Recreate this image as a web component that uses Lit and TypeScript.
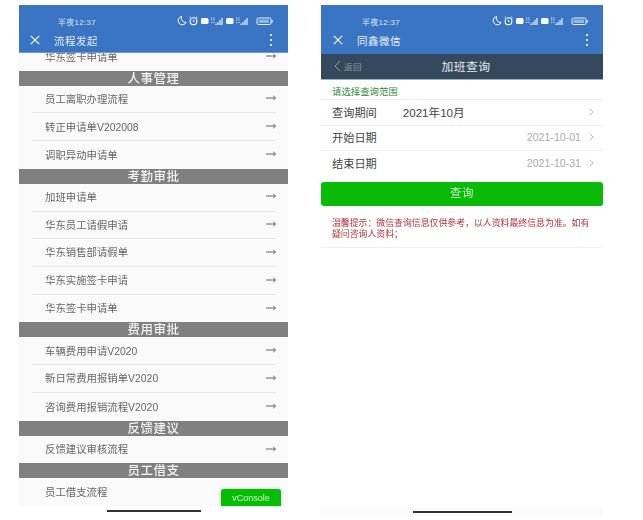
import { LitElement, html, css, svg } from "lit";
import { customElement } from "lit/decorators.js";

const sections: { title?: string; items: string[] }[] = [
  { items: ["华东签卡申请单"] },
  { title: "人事管理", items: ["员工离职办理流程", "转正申请单V202008", "调职异动申请单"] },
  { title: "考勤审批", items: ["加班申请单", "华东员工请假申请", "华东销售部请假单", "华东实施签卡申请", "华东签卡申请单"] },
  { title: "费用审批", items: ["车辆费用申请V2020", "新日常费用报销单V2020", "咨询费用报销流程V2020"] },
  { title: "反馈建议", items: ["反馈建议审核流程"] },
  { title: "员工借支", items: ["员工借支流程"] },
];

const statusIcons = svg`
  <path d="M4.5 1.5a4.2 4.2 0 1 0 4.6 6A4.6 4.6 0 0 1 4.5 1.5z" fill="none" stroke="#fff" stroke-width="1"/>
  <circle cx="16.5" cy="6.2" r="3.4" fill="none" stroke="#fff" stroke-width="1.1"/>
  <path d="M12.5 2.7l1.5-1M20.5 2.7l-1.5-1M16.3 4.7v1.8h1.6" stroke="#fff" stroke-width=".8" fill="none"/>
  <rect x="24" y="3" width="7.5" height="6" rx="1.5" fill="#fff"/>
  <path d="M34 3h4M34 5h4M34 7.500h4" stroke="#fff" stroke-width=".8" stroke-dasharray="1 .7"/>
  <path d="M39 8.500v1.500M41 7v3M43 5v5M45 3v7" stroke="#fff" stroke-width="1.1"/>
  <rect x="49" y="3" width="7.5" height="6" rx="1.5" fill="#fff"/>
  <path d="M59 3h4M59 5h4M59 7.500h4" stroke="#fff" stroke-width=".8" stroke-dasharray="1 .7"/>
  <path d="M64 8.500v1.500M66 7v3M68 5v5M70 3v7" stroke="#fff" stroke-width="1.1"/>
  <rect x="80" y="3" width="14" height="6.5" rx="1.5" fill="none" stroke="#fff" stroke-width=".9"/>
  <rect x="81.5" y="4.5" width="10.5" height="3.5" fill="#fff" opacity=".45"/>
  <rect x="94.5" y="5" width="1.2" height="2.5" fill="#fff"/>
`;

const closeIcon = html`<svg class="close" viewBox="0 0 10 10" width="10" height="10"><path d="M.8.8l8.400 8.400M9.200.8L.8 9.200" stroke="#fff" stroke-width="1.1" fill="none"/></svg>`;
const dots = html`<svg class="dots" viewBox="0 0 4 14" width="4" height="14"><circle cx="2" cy="2" r="1.1" fill="#fff"/><circle cx="2" cy="7" r="1.1" fill="#fff"/><circle cx="2" cy="12" r="1.1" fill="#fff"/></svg>`;
const arrow = html`<svg class="arrow" viewBox="0 0 10 6" width="10" height="6"><path d="M0 3h9.300M7.300 1l2.200 2-2.200 2" stroke="#555" stroke-width=".9" fill="none"/></svg>`;
const chev = html`<svg class="chev" viewBox="0 0 5 8" width="5" height="8"><path d="M.8.8L4.200 4 .8 7.200" stroke="#bbb" stroke-width="1" fill="none"/></svg>`;

@customElement("app-root")
export class AppRoot extends LitElement {
  static styles = css`
    :host {
      display: flex;
      width: 643px;
      height: 520px;
      padding: 5px 0 0 19px;
      box-sizing: border-box;
      background: #fff;
      gap: 33px;
      align-items: flex-start;
      overflow: hidden;
      font-family: "Liberation Sans", "Noto Sans CJK SC", sans-serif;
    }
    .phone {
      position: relative;
      display: flex;
      flex-direction: column;
      filter: blur(0.45px);
    }
    .left { width: 269px; height: 510px; }
    .right { width: 282px; height: 512px; }
    .head {
      background: #3a75c4;
      height: 48px;
      flex: none;
      color: #fff;
      display: flex;
      flex-direction: column;
      box-sizing: border-box;
      border-bottom: 1px solid #6f97cf;
    }
    .right .head { height: 49px; border-bottom: none; }
    .status {
      display: flex;
      align-items: center;
      justify-content: space-between;
      height: 12px;
      margin-top: 10px;
      font-size: 8px;
      letter-spacing: 0.3px;
      color: #dfe8f5;
    }
    .left .status { padding: 0 15px 0 39px; }
    .right .status { padding: 0 15px 0 41px; }
    .status svg { display: block; }
    .titlebar {
      display: flex;
      align-items: center;
      height: 18px;
      margin-top: 4px;
      font-size: 10.5px;
      letter-spacing: 0.5px;
      color: #eaf0f9;
    }
    .left .titlebar { padding: 0 15px 0 11px; }
    .right .titlebar { padding: 0 14px 0 12px; }
    .close { margin-right: 14px; }
    .dots { margin-left: auto; }
    .scroll {
      height: 453px;
      flex: none;
      overflow: hidden;
      background: #fafafa;
    }
    .inner { margin-top: -10px; }
    .sect {
      background: #808080;
      color: #f4f4f4;
      height: 15px;
      line-height: 16px;
      text-align: center;
      font-size: 12.5px;
      font-weight: 500;
      letter-spacing: 0.5px;
    }
    .rows { padding: 0 12px 0 13px; }
    .row {
      height: 27.72px;
      box-sizing: border-box;
      display: flex;
      align-items: center;
      justify-content: space-between;
      padding: 0 0 1.5px 13px;
      font-size: 10.4px;
      color: #666;
      border-bottom: 1px solid #e6e6e6;
    }
    .row:last-child { border-bottom: none; }
    .bottom {
      flex: 1;
      background: #fff;
      display: flex;
      justify-content: center;
      padding-top: 4px;
    }
    .home {
      width: 94px;
      height: 2px;
      background: #333;
    }
    .vc {
      position: absolute;
      left: 202px;
      top: 484px;
      width: 60px;
      height: 17px;
      background: #04be02;
      color: #d5f3d5;
      border-radius: 3px 3px 0 0;
      font-size: 9px;
      line-height: 18px;
      text-align: center;
      box-shadow: 0 0 3px rgba(0, 0, 0, 0.25);
    }
    .navbar {
      height: 26px;
      flex: none;
      background: #34495e;
      display: flex;
      align-items: center;
      position: relative;
      color: #e6e9ed;
      border-bottom: 1px solid #9fb0bf;
      box-sizing: border-box;
      justify-content: center;
      padding: 0 0 2px 8px;
      font-size: 11.8px;
      letter-spacing: 0.4px;
    }
    .back {
      position: absolute;
      left: 13px;
      top: 6px;
      display: flex;
      align-items: center;
      gap: 3px;
      color: #8f9caa;
      font-size: 8.5px;
    }
    .content {
      flex: 1;
      background: #fff;
      display: flex;
      flex-direction: column;
    }
    .hint {
      height: 19px;
      line-height: 23px;
      padding-left: 11px;
      font-size: 9.4px;
      color: #2e8b3c;
    }
    .field {
      height: 25.5px;
      box-sizing: border-box;
      display: flex;
      align-items: center;
      padding: 0 9px 1px 11px;
      font-size: 11.2px;
      color: #444;
      border-top: 1px solid #f0f0f0;
    }
    .period { margin-left: 26px; color: #444; font-size: 11.6px; }
    .val { margin-left: auto; margin-right: 8px; color: #aaa; font-size: 10.6px; }
    .field .period + .chev { margin-left: auto; }
    .btn {
      height: 24px;
      margin-top: 6px;
      background: #09bb07;
      border-radius: 3px;
      color: #cdeecd;
      text-align: center;
      line-height: 22px;
      font-size: 11.5px;
      letter-spacing: 0.6px;
    }
    .warn {
      margin-top: 12px;
      padding: 0 11px 6px;
      font-size: 8.9px;
      line-height: 11.5px;
      color: #b5323a;
      border-bottom: 1px solid #f2f2f2;
    }
    .grow { flex: 1; }
    .right .bottom {
      flex: none;
      height: 10px;
      padding-top: 4px;
      background: #fafbfc;
      box-sizing: border-box;
    }
    .right .home { width: 99px; }
  `;

  private header(title: string) {
    return html`<div class="head">
      <div class="status">
        <span>半夜12:37</span>
        <svg viewBox="0 0 96 12" width="96" height="12">${statusIcons}</svg>
      </div>
      <div class="titlebar">${closeIcon}<span>${title}</span>${dots}</div>
    </div>`;
  }

  render() {
    return html`
      <div class="phone left">
        ${this.header("流程发起")}
        <div class="scroll">
          <div class="inner">
            ${sections.map(
              (s) => html`
                ${s.title ? html`<div class="sect">${s.title}</div>` : ""}
                <div class="rows">
                  ${s.items.map(
                    (i) => html`<div class="row"><span>${i}</span>${i === "员工借支流程" ? "" : arrow}</div>`
                  )}
                </div>
              `
            )}
          </div>
        </div>
        <div class="bottom"><div class="home"></div></div>
        <div class="vc">vConsole</div>
      </div>
      <div class="phone right">
        ${this.header("同鑫微信")}
        <div class="navbar">
          <div class="back">
            <svg viewBox="0 0 7 12" width="7" height="12"><path d="M6 1L1 6l5 5" stroke="#8f9caa" stroke-width="1" fill="none"/></svg>
            <span>返回</span>
          </div>
          <span>加班查询</span>
        </div>
        <div class="content">
          <div class="hint">请选择查询范围</div>
          <div class="field"><span>查询期间</span><span class="period">2021年10月</span>${chev}</div>
          <div class="field"><span>开始日期</span><span class="val">2021-10-01</span>${chev}</div>
          <div class="field"><span>结束日期</span><span class="val">2021-10-31</span>${chev}</div>
          <div class="btn">查询</div>
          <div class="warn">温馨提示：微信查询信息仅供参考，以人资料最终信息为准。如有疑问咨询人资料；</div>
          <div class="grow"></div>
        </div>
        <div class="bottom"><div class="home"></div></div>
      </div>
    `;
  }
}
